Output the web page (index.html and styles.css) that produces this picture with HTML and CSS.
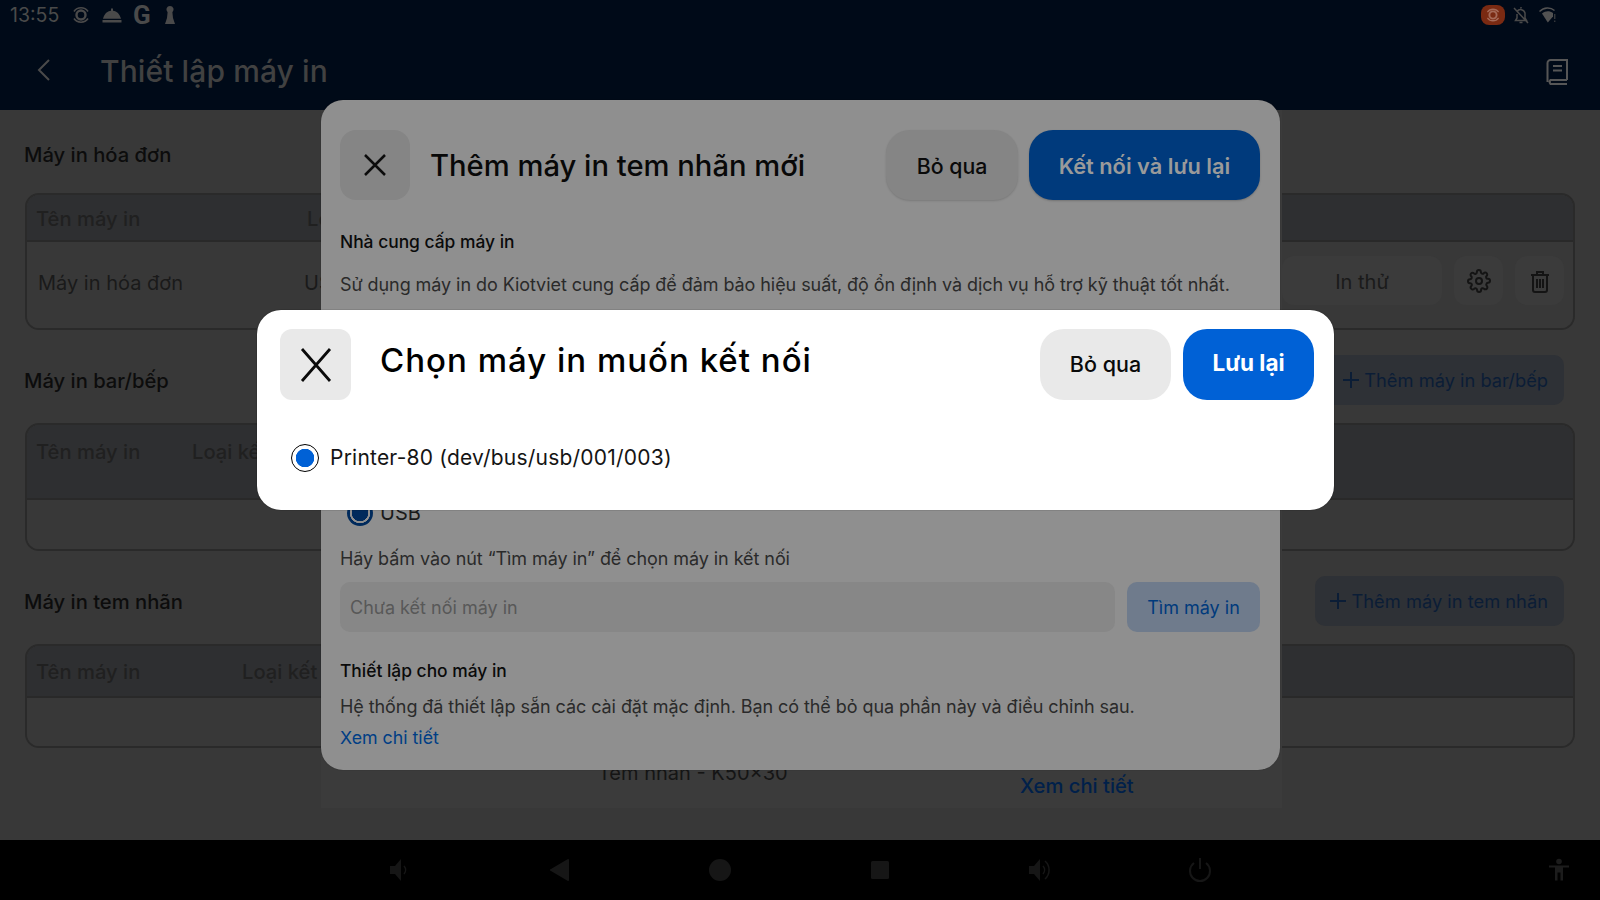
FILE: index.html
```html
<!DOCTYPE html>
<html lang="vi">
<head>
    <meta charset="UTF-8">
    <meta name="viewport" content="width=device-width, initial-scale=1.0">
    <title>Thiết lập máy in</title>
    <link rel="stylesheet" href="styles.css">
</head>
<body>
    <div class="screen">
        <header class="topbar">
            <div class="status">
                <span class="clock">13:55</span>
                <svg class="st-ico" width="20" height="20" viewBox="0 0 20 20"><circle cx="10" cy="10" r="4.5" fill="none" stroke="#4a4a4a" stroke-width="2.4"/><path d="M3 6.5A8.5 8.5 0 0 1 17 6.5M3 13.5A8.5 8.5 0 0 0 17 13.5" fill="none" stroke="#4a4a4a" stroke-width="1.6"/></svg>
                <svg class="st-ico" width="20" height="20" viewBox="0 0 20 20"><path d="M9 3.5h2v2.2c4 .4 6.6 3.2 8 8H1c1.400-4.800 4-7.600 8-8zM.5 15h19v2.500H.5z" fill="#4a4a4a"/></svg>
                <span class="st-g">G</span>
                <svg class="st-ico" width="14" height="20" viewBox="0 0 14 20"><path d="M7 1a3.600 3.600 0 0 1 2.400 6.300L10 13l2 6H2l2-6 .6-5.700A3.600 3.600 0 0 1 7 1z" fill="#4a4a4a"/></svg>
                <div class="st-right">
                    <span class="rec">
                        <svg width="16" height="16" viewBox="0 0 20 20"><circle cx="10" cy="10" r="4.500" fill="none" stroke="#a56a58" stroke-width="2.400"/><path d="M3 6.500A8.500 8.500 0 0 1 17 6.500M3 13.500A8.500 8.500 0 0 0 17 13.500" fill="none" stroke="#a56a58" stroke-width="1.600"/></svg>
                    </span>
                    <svg class="bell" width="18" height="20" viewBox="0 0 18 20"><path d="M5 6.500a4.500 4.500 0 0 1 8 1.500v5l1.500 2.500H3.500L5 13V9M7.500 17.500h3M9 2v1.500M2 3l14 15" fill="none" stroke="#4a4a4a" stroke-width="1.500"/></svg>
                    <svg width="18" height="18" viewBox="0 0 18 18"><path d="M.5 5.500C5 1 11.500 1 15.500 4.500" fill="none" stroke="#525252" stroke-width="1.400"/><path d="M3 7.500c3.500-2.800 7.500-2.800 11-.5v3.500L8.800 16.500z" fill="#525252"/><path d="M15.800 8v5M15.800 14.500v1.500" stroke="#4a4a4a" stroke-width="1"/></svg>
                </div>
            </div>
            <div class="appbar">
                <svg class="back" width="16" height="24" viewBox="0 0 16 24"><path d="M13 2L3 12l10 10" fill="none" stroke="#4a4a4a" stroke-width="2"/></svg>
                <h1>Thiết lập máy in</h1>
                <svg class="book" width="24" height="26" viewBox="0 0 24 26"><path d="M22 21H5.500a3 3 0 0 0 0 4H22M2.500 23V4a3 3 0 0 1 3-3H22v20M8 7h9M8 11.500h9" fill="none" stroke="#565656" stroke-width="2"/></svg>
            </div>
        </header>

        <main class="content">
            <section>
                <div class="sec-head first"><h2>Máy in hóa đơn</h2></div>
                <div class="tbl">
                    <div class="tbl-head h-a"><span>Tên máy in</span><span>Loại kết nối</span></div>
                    <div class="tbl-row r-a">
                        <span class="name">Máy in hóa đơn</span>
                        <span class="type">USB</span>
                        <div class="actions">
                            <span class="act test">In thử</span>
                            <span class="act icon">
                                <svg width="24" height="24" viewBox="0 0 24 24"><circle cx="12" cy="12" r="3" fill="none" stroke="#141414" stroke-width="2"/><path d="M19.400 15a1.650 1.650 0 0 0 .33 1.820l.06.06a2 2 0 1 1-2.830 2.830l-.06-.06a1.650 1.650 0 0 0-2.820 1.170V21a2 2 0 1 1-4 0v-.09a1.650 1.650 0 0 0-2.880-1.120l-.06.06a2 2 0 1 1-2.830-2.830l.06-.06a1.650 1.650 0 0 0-1.170-2.820H3a2 2 0 1 1 0-4h.09a1.650 1.650 0 0 0 1.120-2.880l-.06-.06a2 2 0 1 1 2.830-2.830l.06.06a1.650 1.650 0 0 0 2.820-1.170V3a2 2 0 1 1 4 0v.09a1.650 1.650 0 0 0 2.880 1.120l.06-.06a2 2 0 1 1 2.830 2.830l-.06.06a1.650 1.650 0 0 0 1.170 2.820H21a2 2 0 1 1 0 4h-.09a1.650 1.650 0 0 0-1.510 1.140z" fill="none" stroke="#141414" stroke-width="2"/></svg>
                            </span>
                            <span class="act icon">
                                <svg width="22" height="24" viewBox="0 0 22 24"><path d="M2 6h18M8 6V3h6v3M4 6v15a2 2 0 0 0 2 2h10a2 2 0 0 0 2-2V6M8 10v9M11 10v9M14 10v9" fill="none" stroke="#141414" stroke-width="2"/></svg>
                            </span>
                        </div>
                    </div>
                </div>
            </section>

            <section>
                <div class="sec-head">
                    <h2>Máy in bar/bếp</h2>
                    <span class="add">
                        <svg width="16" height="16" viewBox="0 0 16 16"><path d="M8 0v16M0 8h16" stroke="#0b1d36" stroke-width="2"/></svg>
                        Thêm máy in bar/bếp
                    </span>
                </div>
                <div class="tbl">
                    <div class="tbl-head h-b"><span>Tên máy in</span><span>Loại kết nối</span></div>
                    <div class="tbl-row r-b"></div>
                </div>
            </section>

            <section>
                <div class="sec-head">
                    <h2>Máy in tem nhãn</h2>
                    <span class="add">
                        <svg width="16" height="16" viewBox="0 0 16 16"><path d="M8 0v16M0 8h16" stroke="#0b1d36" stroke-width="2"/></svg>
                        Thêm máy in tem nhãn
                    </span>
                </div>
                <div class="tbl">
                    <div class="tbl-head h-c"><span>Tên máy in</span><span>Loại kết nối</span></div>
                    <div class="tbl-row r-c"></div>
                </div>
            </section>
        </main>

        <footer class="navbar">
            <svg width="24" height="24" viewBox="0 0 24 24"><path d="M2 8h5l6-7v22l-6-7H2z" fill="#161616"/><path d="M16 8a6 6 0 0 1 0 8" fill="none" stroke="#161616" stroke-width="1.500"/></svg>
            <svg width="24" height="24" viewBox="0 0 24 24"><path d="M21 2v20a1 1 0 0 1-1.500.8L3 13a1 1 0 0 1 0-2L19.500 1.200A1 1 0 0 1 21 2z" fill="#161616"/></svg>
            <svg width="24" height="24" viewBox="0 0 24 24"><circle cx="12" cy="12" r="11" fill="#161616"/></svg>
            <svg width="24" height="24" viewBox="0 0 24 24"><rect x="3" y="3" width="18" height="18" rx="1.500" fill="#161616"/></svg>
            <svg width="26" height="24" viewBox="0 0 26 24"><path d="M1 8h5l6-7v22l-6-7H1z" fill="#161616"/><path d="M15 8a6 6 0 0 1 0 8M17 3a12 12 0 0 1 0 18" fill="none" stroke="#161616" stroke-width="1.500"/></svg>
            <svg class="power" width="24" height="26" viewBox="0 0 24 26"><path d="M12 1v11M6 6a10 10 0 1 0 12 0" fill="none" stroke="#161616" stroke-width="2"/></svg>
            <svg class="a11y" width="24" height="24" viewBox="0 0 24 24"><circle cx="12" cy="3.500" r="2.800" fill="#1c1c1c"/><path d="M2 7.500h20v2h-6v13h-2.500v-8h-3v8H8v-13H2z" fill="#1c1c1c"/></svg>
        </footer>

        <div class="sheet">
            <div class="sheet-line">Tem nhãn - K50×30</div>
            <div class="sheet-link">Xem chi tiết</div>
        </div>

        <div class="modal-add">
            <div class="modal-top">
                <span class="close">
                    <svg width="26" height="26" viewBox="0 0 26 26"><path d="M3 3l20 20M23 3L3 23" fill="none" stroke="#0c0c0c" stroke-width="2.500"/></svg>
                </span>
                <h3>Thêm máy in tem nhãn mới</h3>
                <span class="btn btn-skip">Bỏ qua</span>
                <span class="btn btn-save">Kết nối và lưu lại</span>
            </div>
            <h4 class="m-sub">Nhà cung cấp máy in</h4>
            <p class="m-text first-text">Sử dụng máy in do Kiotviet cung cấp để đảm bảo hiệu suất, độ ổn định và dịch vụ hỗ trợ kỹ thuật tốt nhất.</p>
            <label class="usb"><span class="usb-radio"></span>USB</label>
            <p class="m-text hint">Hãy bấm vào nút “Tìm máy in” để chọn máy in kết nối</p>
            <div class="find">
                <div class="find-input">Chưa kết nối máy in</div>
                <span class="find-btn">Tìm máy in</span>
            </div>
            <h4 class="m-sub setup">Thiết lập cho máy in</h4>
            <p class="m-text setup-text">Hệ thống đã thiết lập sẵn các cài đặt mặc định. Bạn có thể bỏ qua phần này và điều chỉnh sau.</p>
            <a class="m-link">Xem chi tiết</a>
        </div>

        <div class="modal-pick">
            <div class="pick-top">
                <span class="pick-close">
                    <svg width="34" height="34" viewBox="0 0 34 34"><path d="M3 1l28 32M31 1L3 33" fill="none" stroke="#0a0a0a" stroke-width="2.800"/></svg>
                </span>
                <h3>Chọn máy in muốn kết nối</h3>
                <span class="pick-btn pick-skip">Bỏ qua</span>
                <span class="pick-btn pick-save">Lưu lại</span>
            </div>
            <label class="pick-item"><span class="pick-radio"></span>Printer-80 (dev/bus/usb/001/003)</label>
        </div>
    </div>
</body>
</html>
```

FILE: styles.css
```css
*{
    margin: 0;
    padding: 0;
    box-sizing: border-box;
}
body{
    background-color: #383838;
    font-family: Inter, "Noto Sans", sans-serif;
    overflow: hidden;
}
.screen{
    position: relative;
    width: 1600px;
    height: 900px;
    display: flex;
    flex-direction: column;
}

/* top */
.topbar{
    height: 110px;
    background-color: #000a18;
    flex: none;
}
.status{
    height: 30px;
    display: flex;
    align-items: center;
    padding-left: 10px;
    color: #4a4a4a;
}
.clock{
    font-size: 19.500px;
    width: 61px;
}
.st-ico{
    margin-right: 11px;
}
.st-g{
    font-family: Roboto, sans-serif;
    font-weight: 700;
    font-size: 26px;
    width: 30px;
}
.st-right{
    margin-left: auto;
    margin-right: 43px;
    display: flex;
    align-items: center;
    gap: 7px;
}
.rec{
    width: 24px;
    height: 20px;
    border-radius: 8px;
    background-color: #7a2a12;
    display: flex;
    align-items: center;
    justify-content: center;
}
.bell{
    margin-right: 2px;
}
.appbar{
    height: 80px;
    display: flex;
    align-items: center;
    padding-left: 36px;
    padding-right: 31px;
}
.appbar h1{
    font-size: 30px;
    font-weight: 500;
    color: #414141;
    margin-left: 48px;
    padding-top: 2px;
    letter-spacing: .1px;
}
.back{
    flex: none;
}
.book{
    margin-left: auto;
    margin-top: 3px;
}

/* page behind */
.content{
    flex: 1;
    padding: 20px 25px 0;
}
section{
    margin-bottom: 25px;
}
.sec-head{
    height: 50px;
    margin-bottom: 18px;
    display: flex;
    align-items: center;
    justify-content: space-between;
}
.sec-head.first{
    height: 48px;
    margin-bottom: 15px;
}
.sec-head h2{
    font-size: 20.200px;
    font-weight: 500;
    color: #0c0c0c;
    margin-left: -1px;
}
.add{
    height: 50px;
    width: 249px;
    margin-right: 11px;
    background-color: #2e3136;
    border-radius: 10px;
    display: flex;
    align-items: center;
    justify-content: flex-end;
    gap: 5px;
    padding-right: 16px;
    color: #0b1d36;
    font-size: 18.300px;
}
.tbl{
    border: 2px solid #2a2a2a;
    border-radius: 14px;
    overflow: hidden;
}
.tbl-head{
    display: flex;
    background-color: #2e2f31;
    border-bottom: 2px solid #292929;
    font-size: 20.200px;
    font-weight: 500;
    color: #202020;
    padding-left: 9px;
    padding-top: 11px;
}
.tbl-head span:first-child{
    flex: none;
}
.h-a{ height: 47px; }
.h-a span:first-child{ width: 271px; }
.h-b{ height: 75px; padding-top: 14px; }
.h-b span:first-child{ width: 156px; }
.h-c{ height: 52px; padding-top: 13px; }
.h-c span:first-child{ width: 206px; }
.tbl-row{
    display: flex;
    background-color: #383838;
}
.r-a{
    height: 86px;
    padding: 14px 9px 0 11px;
    font-size: 20px;
    color: #1a1a1a;
}
.r-b{ height: 49px; }
.r-c{ height: 48px; }
.name{
    width: 266px;
    line-height: 55px;
}
.type{
    line-height: 55px;
}
.actions{
    margin-left: auto;
    display: flex;
    gap: 12px;
}
.act{
    height: 49px;
    border-radius: 12px;
    background-color: #3b3b3b;
    display: flex;
    align-items: center;
    justify-content: center;
}
.test{
    width: 160px;
    padding-top: 2px;
}
.icon{
    width: 49px;
}

/* bottom nav */
.navbar{
    position: relative;
    height: 60px;
    flex: none;
    background-color: #000;
    display: flex;
    align-items: center;
    padding-left: 388px;
    gap: 136px;
}
.power{
    margin-left: -2px;
}
.a11y{
    position: absolute;
    left: 1547px;
    top: 18px;
}

/* sheet + first modal */
.sheet{
    position: absolute;
    left: 321px;
    top: 110px;
    width: 961px;
    height: 698px;
    background-color: #3b3b3b;
}
.sheet-line{
    position: absolute;
    left: 277px;
    top: 651px;
    font-size: 20px;
    color: #151515;
}
.sheet-link{
    position: absolute;
    left: 699px;
    top: 663px;
    font-size: 20.200px;
    font-weight: 500;
    color: #00204a;
}
.modal-add{
    position: absolute;
    left: 321px;
    top: 100px;
    width: 959px;
    height: 670px;
    padding: 30px 20px 0 19px;
    background-color: #8f8f8f;
    border-radius: 22px;
    box-shadow: 0 0 1px rgba(0,0,0,.5);
}
.modal-top{
    display: flex;
    align-items: center;
}
.close{
    width: 70px;
    height: 70px;
    border-radius: 16px;
    background-color: #858585;
    display: flex;
    align-items: center;
    justify-content: center;
}
.modal-top h3{
    font-size: 29.200px;
    font-weight: 500;
    color: #080808;
    margin-left: 20px;
    padding-top: 1px;
    flex: 1;
}
.btn{
    height: 70px;
    border-radius: 24px;
    display: flex;
    align-items: center;
    justify-content: center;
    font-size: 21.300px;
    font-weight: 500;
    padding-top: 1px;
}
.btn-skip{
    width: 132px;
    background-color: #858585;
    color: #0a0a0a;
    box-shadow: 0 1px 2px rgba(0,0,0,.15);
}
.btn-save{
    width: 231px;
    margin-left: 11px;
    background-color: #003a7c;
    color: #9a9a9a;
    font-size: 21.800px;
    font-weight: 600;
    box-shadow: 0 1px 2px rgba(0,0,0,.2);
}
.m-sub{
    font-size: 17.400px;
    font-weight: 500;
    color: #0a0a0a;
    line-height: 24px;
}
.m-text{
    font-size: 18px;
    letter-spacing: -.07px;
    line-height: 24px;
    color: #2a2a2a;
}
.modal-top + .m-sub{
    margin-top: 30px;
}
.first-text{
    margin-top: 19px;
}
.usb{
    display: flex;
    align-items: center;
    margin-top: 203px;
    margin-left: 7px;
    font-size: 20px;
    color: #1a1a1a;
    height: 26px;
}
.usb-radio{
    width: 26px;
    height: 26px;
    margin-right: 7px;
    border-radius: 50%;
    background: radial-gradient(circle, #002a5c 0 8px, #8f8f8f 8.500px 10px, #002a5c 10.500px);
}
.hint{
    margin-top: 21px;
}
.find{
    display: flex;
    margin-top: 11px;
    gap: 12px;
}
.find-input{
    flex: 1;
    height: 50px;
    border-radius: 10px;
    background-color: #878787;
    color: #585858;
    font-size: 18px;
    line-height: 51px;
    padding-left: 10px;
}
.find-btn{
    width: 133px;
    height: 50px;
    border-radius: 10px;
    background-color: #6f7b8c;
    color: #003a7c;
    font-size: 18px;
    display: flex;
    align-items: center;
    justify-content: center;
}
.setup{
    margin-top: 27px;
}
.setup-text{
    margin-top: 12px;
}
.m-link{
    display: block;
    margin-top: 7px;
    font-size: 17.800px;
    line-height: 24px;
    color: #003e85;
}

/* second modal */
.modal-pick{
    position: absolute;
    left: 257px;
    top: 310px;
    width: 1077px;
    height: 200px;
    background-color: #fff;
    border-radius: 24px;
    box-shadow: 0 0 1px rgba(0,0,0,.9);
    padding: 19px 20px 0 23px;
}
.pick-top{
    display: flex;
}
.pick-close{
    width: 71px;
    height: 71px;
    border-radius: 12px;
    background-color: #e9e9e9;
    display: flex;
    align-items: center;
    justify-content: center;
}
.pick-top h3{
    flex: 1;
    font-size: 33px;
    font-weight: 500;
    color: #000;
    margin-left: 29px;
    line-height: 62px;
    letter-spacing: 1px;
}
.pick-btn{
    width: 131px;
    height: 71px;
    border-radius: 24px;
    display: flex;
    align-items: center;
    justify-content: center;
    font-size: 21.500px;
    padding-bottom: 2px;
}
.pick-skip{
    background-color: #e9e9e9;
    color: #0a0a0a;
    font-weight: 500;
}
.pick-save{
    margin-left: 12px;
    background-color: #0061d6;
    color: #fff;
    font-size: 22.500px;
    font-weight: 700;
    padding-bottom: 4px;
}
.pick-item{
    display: flex;
    align-items: center;
    margin-top: 42px;
    margin-left: 11px;
    font-size: 21px;
    color: #141414;
    letter-spacing: .22px;
}
.pick-radio{
    width: 28px;
    height: 28px;
    margin-top: 2px;
    margin-right: 11px;
    border-radius: 50%;
    border: 1.500px solid #000;
    background: radial-gradient(circle, #0061d6 0 9px, #fff 9.500px);
}
```
